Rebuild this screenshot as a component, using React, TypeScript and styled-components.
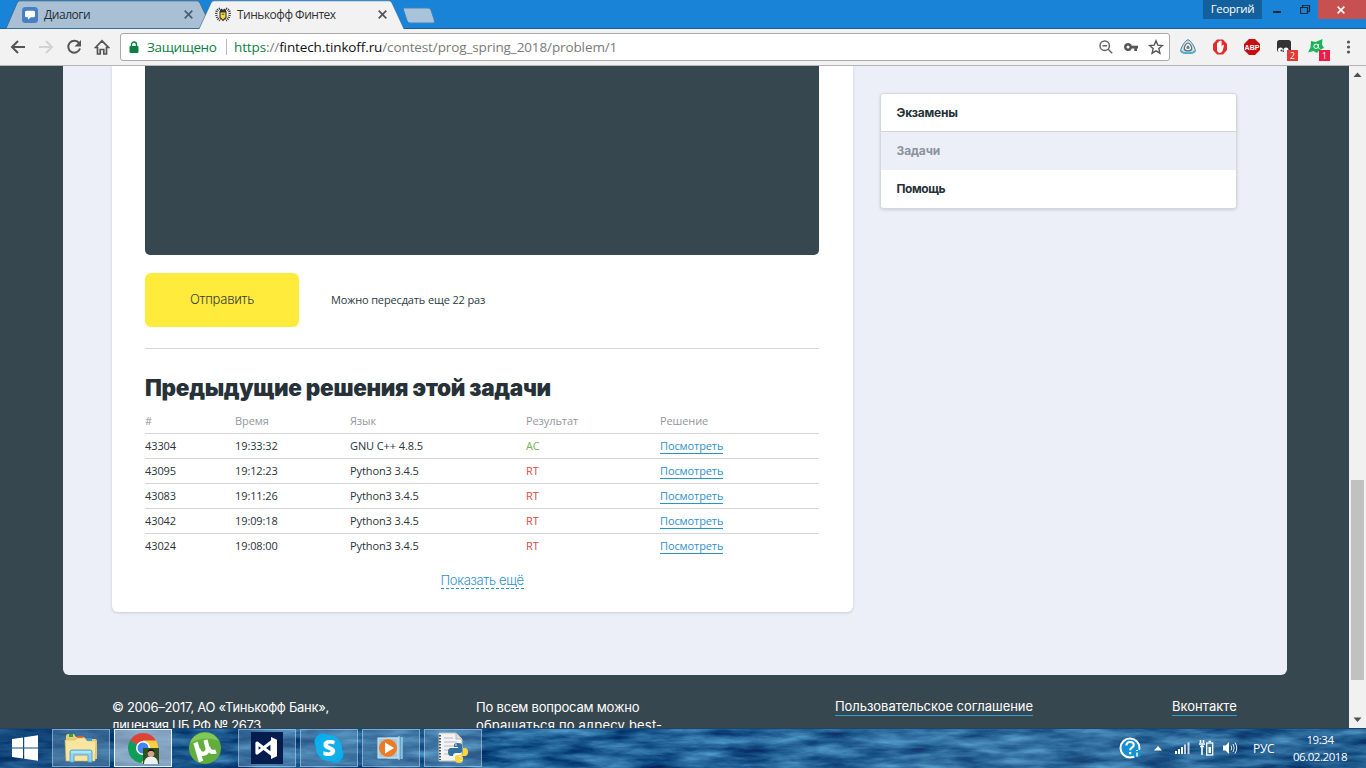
import React from "react";
import styled, { createGlobalStyle, css } from "styled-components";

const Global = createGlobalStyle`
  * { box-sizing: border-box; }
  body { margin: 0; overflow: hidden; background: #37474f; }
  svg { display: block; flex: none; }
`;

const ui = `"Open Sans", "Noto Sans", sans-serif`;
const brand = `Inter, "Open Sans", sans-serif`;

const Desktop = styled.div`
  width: 1366px;
  height: 768px;
  display: flex;
  flex-direction: column;
  overflow: hidden;
  font-family: ${ui};
`;

/* ---------- browser chrome ---------- */

const TabStrip = styled.header`
  height: 29px;
  flex: none;
  display: flex;
  align-items: flex-start;
  background: #1883d7;
  border-bottom: 1px solid #1a5c92;
  padding-left: 6px;
`;

const Tab = styled.div<{ $active?: boolean }>`
  position: relative;
  width: 206px;
  height: 29px;
  margin-left: ${(p) => (p.$active ? -13 : 0)}px;
  z-index: ${(p) => (p.$active ? 2 : 1)};
  display: flex;
  align-items: center;
  padding: 0 ${(p) => (p.$active ? 18 : 19)}px 0 16px;
  font-size: 12px;
  color: ${(p) => (p.$active ? "#333" : "#1f2d3a")};
`;

const TabShape = styled.svg`
  position: absolute;
  inset: 0;
  z-index: -1;
`;

const TabTitle = styled.span<{ $spacing: number }>`
  flex: 1;
  margin-left: 6px;
  letter-spacing: ${(p) => p.$spacing}px;
  white-space: nowrap;
`;

const NewTab = styled.svg`
  margin: 7px 0 0 -3px;
`;

const WindowControls = styled.div`
  margin-left: auto;
  display: flex;
  height: 19px;
`;

const UserName = styled.div`
  width: 59px;
  background: #14609c;
  color: #fff;
  font-size: 11.5px;
  line-height: 18px;
  text-align: center;
  letter-spacing: -0.35px;
`;

const ControlButton = styled.div<{ $w: number; $close?: boolean }>`
  width: ${(p) => p.$w}px;
  display: flex;
  align-items: center;
  justify-content: center;
  padding-right: 3px;
  background: ${(p) => (p.$close ? "#c75050" : "transparent")};
`;

const Toolbar = styled.div`
  height: 37px;
  flex: none;
  display: flex;
  align-items: center;
  background: #f2f2f2;
  border-bottom: 1px solid #b4b4b4;
  padding-left: 10px;
`;

const NavButtons = styled.nav`
  display: flex;
  gap: 12px;
  width: 110px;
`;

const Omnibox = styled.div`
  width: 1050px;
  height: 28px;
  display: flex;
  align-items: center;
  background: #fff;
  border: 1px solid #aaa;
  border-radius: 3px;
  padding: 0 5px 0 8px;
  font-size: 13.5px;
`;

const Secure = styled.span`
  color: #0b8043;
  margin-left: 8px;
  width: 79px;
  letter-spacing: -0.36px;
`;

const Url = styled.span`
  border-left: 1px solid #bbb;
  padding-left: 7px;
  line-height: 16px;
  color: #7a7a7a;
  flex: 1;
  letter-spacing: -0.11px;
  b { font-weight: 400; color: #0b8043; }
  i { font-style: normal; color: #111; }
`;

const OmniIcons = styled.div`
  display: flex;
  align-items: center;
  gap: 9px;
`;

const Extensions = styled.div`
  flex: 1;
  display: flex;
  align-items: center;
  padding-left: 10px;
  gap: 16px;
`;

const Extension = styled.div`
  position: relative;
  width: 16px;
  height: 16px;
`;

const Badge = styled.span<{ $bg: string }>`
  position: absolute;
  left: 11px;
  top: 11px;
  width: 11px;
  height: 11px;
  background: ${(p) => p.$bg};
  color: #fff;
  font-size: 8.5px;
  line-height: 11px;
  text-align: center;
`;

/* ---------- page ---------- */

const Viewport = styled.div`
  height: 662px;
  flex: none;
  display: flex;
  overflow: hidden;
`;

const Page = styled.div`
  flex: 1;
  background: #37474f;
  overflow: hidden;
`;

const Panel = styled.main`
  margin: 0 62px 0 63px;
  height: 609px;
  padding: 0 50px 0 49px;
  background: #eceff7;
  border-radius: 0 0 6px 6px;
  display: flex;
  justify-content: space-between;
  align-items: flex-start;
`;

const Card = styled.section`
  width: 741px;
  height: 546px;
  padding: 0 34px 0 33px;
  background: #fff;
  border-radius: 0 0 6px 6px;
  box-shadow: 0 1px 3px rgba(55, 71, 79, 0.22);
`;

const Editor = styled.div`
  height: 189px;
  background: #37474f;
  border-radius: 0 0 5px 5px;
`;

const SubmitRow = styled.div`
  height: 94px;
  padding-top: 18px;
  display: flex;
  border-bottom: 1px solid #d5d8da;
`;

const SubmitButton = styled.button`
  width: 154px;
  height: 54px;
  padding: 0 0 2px;
  border: 0;
  border-radius: 6px;
  background: #ffeb3b;
  color: #37403f;
  font: 300 13px ${brand};
  letter-spacing: -0.25px;
`;

const Attempts = styled.span`
  margin-left: 32px;
  line-height: 54px;
  font-size: 11px;
  color: #2c3a41;
  letter-spacing: -0.14px;
`;

const Heading = styled.h2`
  margin: 21px 0 0;
  height: 35px;
  font: 900 22.5px/35px ${brand};
  color: #263238;
  letter-spacing: -0.3px;
  white-space: nowrap;
`;

const Row = styled.div<{ $head?: boolean; $last?: boolean }>`
  display: grid;
  grid-template-columns: 90px 115px 176px 134px 1fr;
  height: ${(p) => (p.$head ? 29 : 25)}px;
  padding: ${(p) => (p.$head ? "3px 0 1px" : "0 0 1px")};
  align-items: center;
  font-size: 11px;
  line-height: 15px;
  letter-spacing: -0.1px;
  color: ${(p) => (p.$head ? "#9398a0" : "#29343b")};
  border-bottom: 1px solid ${(p) => (p.$last ? "transparent" : "#d3d6d9")};
`;

const Verdict = styled.span<{ $ok: boolean }>`
  color: ${(p) => (p.$ok ? "#74b356" : "#d84c3f")};
`;

const link = css`
  color: #2f90c8;
  text-decoration: none;
`;

const ViewLink = styled.a`
  ${link}
  justify-self: start;
  line-height: 14px;
  margin-top: 1px;
  border-bottom: 1px solid #2b93c6;
`;

const MoreLink = styled.a`
  ${link}
  display: block;
  width: 83px;
  margin: 13px auto 0;
  font: 300 13px/16px ${brand};
  letter-spacing: -0.3px;
  white-space: nowrap;
  border-bottom: 1px dashed #2b93c6;
`;

const SideMenu = styled.aside`
  width: 357px;
  margin-top: 27px;
  background: #fff;
  border: 1px solid #d3d8dd;
  border-radius: 4px;
  box-shadow: 0 1px 3px rgba(55, 71, 79, 0.2);
  overflow: hidden;
`;

const SideItem = styled.div<{ $current?: boolean; $h: number; $spacing: number }>`
  height: ${(p) => p.$h}px;
  padding: 0 16px;
  font: 700 12px/${(p) => p.$h}px ${brand};
  letter-spacing: ${(p) => p.$spacing}px;
  text-indent: -0.5px;
  color: ${(p) => (p.$current ? "#8a939b" : "#263238")};
  background: ${(p) => (p.$current ? "#eceff7" : "#fff")};
  ${(p) => p.$current && "border-top: 1px solid #d0d4d8; line-height: 37px;"}
`;

const Footer = styled.footer`
  display: flex;
  padding: 23px 112px 0;
  font: 400 13px/18px ${brand};
  color: #fff;
  white-space: nowrap;
`;

const FooterCell = styled.div<{ $w: number }>`
  width: ${(p) => p.$w}px;
`;

const FooterLine = styled.div<{ $spacing: number }>`
  letter-spacing: ${(p) => p.$spacing}px;
`;

const FooterLink = styled.a<{ $spacing: number }>`
  display: block;
  width: fit-content;
  line-height: 17px;
  letter-spacing: ${(p) => p.$spacing}px;
  border-bottom: 1px solid #2b9fd9;
`;

const Scrollbar = styled.div`
  width: 17px;
  background: #f1f1f1;
  display: flex;
  flex-direction: column;
  align-items: center;
`;

const Thumb = styled.div`
  width: 13px;
  height: 200px;
  margin-top: 397px;
  margin-bottom: 31px;
  background: #c1c1c1;
`;

/* ---------- taskbar ---------- */

const Taskbar = styled.div`
  position: relative;
  height: 40px;
  flex: none;
  display: flex;
  align-items: center;
  overflow: hidden;
  isolation: isolate;
  background: #1c4f80;
`;

const Water = styled.svg`
  position: absolute;
  inset: 0;
  z-index: -1;
`;

const Start = styled.div`
  width: 52px;
  padding-left: 12px;
`;

const TaskButton = styled.div<{ $state?: "open" | "active" }>`
  width: 58px;
  height: 38px;
  margin-right: 4px;
  display: flex;
  align-items: center;
  justify-content: center;
  ${(p) =>
    p.$state === "open" &&
    "background: rgba(150, 185, 215, 0.3); border: 1px solid rgba(190, 212, 232, 0.55);"}
  ${(p) =>
    p.$state === "active" &&
    "background: rgba(200, 215, 230, 0.6); border: 1px solid rgba(240, 246, 252, 0.95);"}
`;

const Tray = styled.div`
  margin-left: auto;
  display: flex;
  align-items: center;
  color: #fff;
  font-size: 12px;
`;

const TrayIcon = styled.div<{ $w: number }>`
  width: ${(p) => p.$w}px;
`;

const Lang = styled.span`
  width: 31px;
  letter-spacing: -0.3px;
`;

const Clock = styled.div`
  width: 72px;
  margin-right: 10px;
  text-align: center;
  font-size: 11.5px;
  line-height: 17px;
  letter-spacing: -0.45px;
`;

const rows: [string, string, string, string][] = [
  ["43304", "19:33:32", "GNU C++ 4.8.5", "AC"],
  ["43095", "19:12:23", "Python3 3.4.5", "RT"],
  ["43083", "19:11:26", "Python3 3.4.5", "RT"],
  ["43042", "19:09:18", "Python3 3.4.5", "RT"],
  ["43024", "19:08:00", "Python3 3.4.5", "RT"],
];

const Close = ({ color = "#555", size = 9 }: { color?: string; size?: number }) => (
  <svg width={size} height={size} viewBox="0 0 9 9" stroke={color} strokeWidth="1.7">
    <path d="M.7.7l7.6 7.6M8.3.7L.7 8.3" />
  </svg>
);

const Browser = () => (
  <>
    <TabStrip>
      <Tab>
        <TabShape width="206" height="29">
          <path d="M0 28.5L11 3Q12 .8 14 .8H191Q193 .8 194 3L206 28.5Z" fill="#a9bfd3" stroke="#3b6d99" />
        </TabShape>
        <svg width="16" height="16" viewBox="0 0 16 16">
          <rect width="16" height="16" rx="3.5" fill="#4680c2" />
          <path d="M4.500 3.800h7q1.500 0 1.500 1.500v3.500q0 1.500-1.500 1.500H8.800L6 12.800v-2.500H4.500Q3 10.300 3 8.800V5.300Q3 3.800 4.500 3.800z" fill="#fff" />
        </svg>
        <TabTitle $spacing={-0.45}>Диалоги</TabTitle>
        <Close color="#4b5f72" />
      </Tab>
      <Tab $active>
        <TabShape width="206" height="29">
          <path d="M0 29L12 3Q13 .8 15 .8H190Q192 .8 193 3L205 29Z" fill="#f2f2f2" />
          <path d="M0 29L12 3Q13 .8 15 .8H190Q192 .8 193 3L205 29" fill="none" stroke="#2f71a8" strokeWidth=".7" />
        </TabShape>
        <svg width="16" height="16" viewBox="0 0 16 16" fill="none" stroke="#333">
          <path d="M5 1.500Q1 3 1.300 7q.2 4 3.700 6.500M11 1.500q4 1.500 3.700 5.500-.2 4-3.700 6.500" strokeWidth="2.400" strokeDasharray="1 1" />
          <path d="M5 4.500l1.200-2.500L8 3.300 9.800 2 11 4.500z" fill="#333" />
          <path d="M5 5h6v5.500L8 13.500l-3-3z" fill="#f7d934" strokeWidth="1.100" />
          <path d="M6.800 7.300h2.400" strokeWidth=".8" />
        </svg>
        <TabTitle $spacing={-0.5}>Тинькофф Финтех</TabTitle>
        <Close />
      </Tab>
      <NewTab width="34" height="17">
        <path d="M2.500 1H26q2 0 3 2l3.500 11q.5 2-1.500 2H8q-2 0-2.800-2L1.500 3Q1 1 2.500 1z" fill="#a9c3db" stroke="#3f83bb" />
      </NewTab>
      <WindowControls>
        <UserName>Георгий</UserName>
        <ControlButton $w={33}>
          <svg width="8" height="9"><rect width="8" height="2" y="6" fill="#1b2a38" /></svg>
        </ControlButton>
        <ControlButton $w={23}>
          <svg width="11" height="10" fill="none" stroke="#1b2a38"><path d="M.5 2.500h7v6h-7zM2.500 2.500v-2h7v6h-2" strokeWidth="1.200" /></svg>
        </ControlButton>
        <ControlButton $w={48} $close><Close color="#fff" size={8} /></ControlButton>
      </WindowControls>
    </TabStrip>
    <Toolbar>
      <NavButtons>
        <svg width="16" height="16" viewBox="0 0 16 16" fill="none" stroke="#555" strokeWidth="2"><path d="M15 8H2.500M8 2L2 8l6 6" /></svg>
        <svg width="16" height="16" viewBox="0 0 16 16" fill="none" stroke="#d2d2d2" strokeWidth="2"><path d="M1 8h12.500M8 2l6 6-6 6" /></svg>
        <svg width="16" height="16" viewBox="0 0 16 16" fill="none" stroke="#555" strokeWidth="2">
          <path d="M13.200 4.200A6 6 0 1 0 14 9.500" /><path d="M15 1v6.500H8.500z" fill="#555" stroke="none" />
        </svg>
        <svg width="16" height="16" viewBox="0 0 16 16" fill="none" stroke="#555" strokeWidth="1.700"><path d="M1.500 8.500L8 1.800l6.500 6.700H12.500V15H9.800v-4.500H6.200V15H3.500V8.500z" /></svg>
      </NavButtons>
      <Omnibox>
        <svg width="10" height="13" viewBox="0 0 10 13"><path d="M2.500 6V3.500a2.500 2.500 0 0 1 5 0V6" fill="none" stroke="#0b8043" strokeWidth="1.400" /><rect x=".5" y="5" width="9" height="7" rx="1" fill="#0b8043" /></svg>
        <Secure>Защищено</Secure>
        <Url><b>https</b>://<i>fintech.tinkoff.ru</i>/contest/prog_spring_2018/problem/1</Url>
        <OmniIcons>
          <svg width="16" height="16" viewBox="0 0 16 16" fill="none" stroke="#666" strokeWidth="1.500"><circle cx="6.700" cy="6.700" r="4.700" /><path d="M10.200 10.200l4 4M4.500 6.700h4.500" /></svg>
          <svg width="16" height="10" viewBox="0 0 16 10"><path fillRule="evenodd" d="M5 1a4 4 0 0 1 3.800 2.800H15v2.600h-1V9h-2.700V6.400H8.800A4 4 0 1 1 5 1zm0 2.500a1.500 1.500 0 1 0 0 3 1.500 1.500 0 0 0 0-3z" fill="#555" /></svg>
          <svg width="16" height="16" viewBox="0 0 16 16" fill="none" stroke="#555" strokeWidth="1.400"><path d="M8 1.800l1.800 4.300 4.600.4-3.500 3.100 1 4.600L8 11.800l-3.900 2.400 1-4.600L1.600 6.500l4.600-.4z" /></svg>
        </OmniIcons>
      </Omnibox>
      <Extensions>
        <Extension>
          <svg width="16" height="16" viewBox="0 0 16 16"><path d="M8 .8C10.500.8 15.500 9 15.300 12 15 15 1 15 .7 12 .5 9 5.500.8 8 .8z" fill="#cfdde5" stroke="#557f97" /><path d="M8 4c2 0 4 4 3.700 6-.6 2.600-6.800 2.600-7.400 0C4 8 6 4 8 4z" fill="#f8f8f8" stroke="#4d7084" strokeWidth="1.200" /><path d="M1 12c2 3 12 3 14 0" fill="none" stroke="#43abc9" strokeWidth="1.500" /><path d="M8 6.500c1 0 1.800 1.500 1.600 2.500-.3 1.300-2.900 1.300-3.200 0C6.200 8 7 6.500 8 6.500z" fill="#777" /></svg>
        </Extension>
        <Extension>
          <svg width="16" height="16" viewBox="0 0 16 16"><path d="M5 .5h6L15 5v6l-4 4.500H5L1 11V5z" fill="#e32b2b" /><path d="M5 8V4q1-1 1.500 0V2.500q1-1 1.500 0V2q1-1 1.600 0v5.500l1-1.500q1.500-.5 1.400.5L10.500 12q-1 2-3 2Q5 13.500 5 11z" fill="#fff" /></svg>
        </Extension>
        <Extension>
          <svg width="16" height="16" viewBox="0 0 16 16"><path d="M5 0h6l5 5v6l-5 5H5l-5-5V5z" fill="#c70d12" /><text x="8" y="10.700" fontFamily="Liberation Sans" fontWeight="700" fontSize="7" textAnchor="middle" fill="#fff">ABP</text></svg>
        </Extension>
        <Extension>
          <svg width="16" height="16" viewBox="0 0 16 16"><path d="M3.500 1h9q2.500 0 2.500 2.500V13H3.500Q1 13 1 10.500v-7Q1 1 3.500 1z" fill="#333" /><circle cx="4.500" cy="11" r="2.500" fill="#fff" /><circle cx="10" cy="11" r="2.500" fill="#fff" /><circle cx="5.500" cy="11.500" r="1" fill="#333" /></svg>
          <Badge $bg="#e53935">2</Badge>
        </Extension>
        <Extension>
          <svg width="16" height="16" viewBox="0 0 16 16"><path d="M3 2l4.500 1L14.500 0 14 5.500 16 9l-4.500 2L9 14l-3.500-2L0 13.500 2.500 8.500z" fill="#1bb35b" /><circle cx="8" cy="7.300" r="2.200" fill="none" stroke="#fff" /><path d="M10.400 5v4l1.200.5" fill="none" stroke="#fff" strokeWidth=".9" /></svg>
          <Badge $bg="#ed1c46">1</Badge>
        </Extension>
        <svg width="16" height="16" fill="#555"><circle cx="8.500" cy="3" r="1.600" /><circle cx="8.500" cy="8" r="1.600" /><circle cx="8.500" cy="13" r="1.600" /></svg>
      </Extensions>
    </Toolbar>
  </>
);

const WaterSurface = () => (
  <Water width="1366" height="40">
    <defs>
      <filter id="waves" x="0" y="0" width="100%" height="100%" colorInterpolationFilters="sRGB">
        <feTurbulence type="fractalNoise" baseFrequency="0.022 0.11" numOctaves="5" seed="21" />
        <feColorMatrix values="0.6 0 0 0 -0.18  0.75 0 0 0 -0.01  0.7 0 0 0 0.22  0 0 0 0 1" />
      </filter>
      <linearGradient id="light">
        <stop offset="0" stopColor="#03285a" stopOpacity=".45" />
        <stop offset=".35" stopColor="#1c5f9c" stopOpacity=".1" />
        <stop offset=".75" stopColor="#6ba3cc" stopOpacity=".28" />
        <stop offset="1" stopColor="#33648f" stopOpacity=".2" />
      </linearGradient>
    </defs>
    <rect width="1366" height="40" filter="url(#waves)" />
    <rect width="1366" height="40" fill="url(#light)" />
    <rect width="1366" height="1" fill="#1c4569" />
  </Water>
);

const TaskbarView = () => (
  <Taskbar>
    <WaterSurface />
    <Start>
      <svg width="26" height="26" viewBox="0 0 26 26" fill="#fff"><path d="M0 4l11-1.600v10H0zM12.200 2.200L26 .2v12.200H12.200zM0 13.600h11v10L0 22zM12.200 13.600H26v12.200l-13.800-2z" /></svg>
    </Start>
    <TaskButton $state="open">
      <svg width="34" height="32" viewBox="0 0 34 32">
        <path d="M2 4q0-2 2-2h6l2 3h8l1 2h10q2 0 2 2v18H2z" fill="#e9cc73" />
        <path d="M5 2h4v3H5z" fill="#28a745" /><path d="M13 4h6v3h-6z" fill="#d45b34" /><path d="M21 6h7v3h-7z" fill="#3b91d1" />
        <path d="M1 8h10l2-2h8l2 3h9l-1 20H2z" fill="#f8e6a0" stroke="#d3b65f" strokeWidth=".6" />
        <path d="M6 30V20q0-2 2-2h18q2 0 2 2v10h-4v-7H10v7z" fill="#8fd3ee" stroke="#5ca8cf" />
        <path d="M7 20h20" stroke="#d9f4fd" />
      </svg>
    </TaskButton>
    <TaskButton $state="active">
      <svg width="32" height="32" viewBox="0 0 32 32">
        <path d="M16 16L3 8.500A15 15 0 0 1 29 8.500z" fill="#db4437" /><path d="M16 16L3 8.500A15 15 0 0 0 14.500 31L21 20z" fill="#0f9d58" />
        <path d="M16 16l5 4-6.500 11A15 15 0 0 0 29 8.500H16z" fill="#ffcd40" /><circle cx="16" cy="16" r="7" fill="#fff" /><circle cx="16" cy="16" r="5.500" fill="#4285f4" />
        <path d="M16 16h16v16H16z" fill="#31501f" /><path d="M17 32q0-7 7-8 7 1 7 8z" fill="#eef1f3" /><circle cx="24" cy="21.500" r="3.300" fill="#d2a386" /><path d="M20.500 21q0-4 3.500-4t3.500 4l-2-2h-3z" fill="#1c1a18" />
      </svg>
    </TaskButton>
    <TaskButton>
      <svg width="34" height="34" viewBox="0 0 34 34">
        <circle cx="17" cy="17" r="16" fill="#62ae3c" /><path d="M2 12A16 16 0 0 1 31 10Q18 4 2 12z" fill="#83c65a" />
        <path d="M7.500 11.500l5.500 19" fill="none" stroke="#fff" strokeWidth="4.500" />
        <path d="M10 18q2 6 6.500 4.500 4-1.500 3-5.500L17.500 9M20 16q2 6.500 8 4.500" fill="none" stroke="#fff" strokeWidth="4.200" />
      </svg>
    </TaskButton>
    <TaskButton $state="open">
      <svg width="32" height="32" viewBox="0 0 32 32"><rect width="32" height="32" fill="#051d4d" /><path d="M6 11L21 22.500V9.500L6 21z" fill="none" stroke="#fff" strokeWidth="3.200" strokeLinejoin="round" /><path d="M20 5l6 2.800v16.400L20 27z" fill="#fff" /></svg>
    </TaskButton>
    <TaskButton $state="open">
      <svg width="30" height="30" viewBox="0 0 30 30">
        <circle cx="9" cy="9" r="8.500" fill="#00aff0" /><circle cx="21" cy="21" r="8.500" fill="#00aff0" /><circle cx="15" cy="15" r="13" fill="#12aeea" />
        <text x="15" y="23" textAnchor="middle" fontFamily="Open Sans" fontWeight="800" fontSize="23" fill="#fff">S</text>
      </svg>
    </TaskButton>
    <TaskButton $state="open">
      <svg width="28" height="26" viewBox="0 0 28 26"><path d="M10 2h15v22H10z" fill="#5ba6cf" /><path d="M22 1v24M25 2v22" stroke="#c7e5f2" /><rect x="1" y="3" width="20" height="20" fill="#a7cbdc" stroke="#d7e9f2" /><circle cx="11" cy="13" r="9" fill="#ed7b26" /><path d="M8 7.500L17 13l-9 5.500z" fill="#fff" /></svg>
    </TaskButton>
    <TaskButton $state="open">
      <svg width="32" height="34" viewBox="0 0 32 34">
        <path d="M2 2h17l6 6v22H2z" fill="#f3f3f3" stroke="#bbb" /><path d="M19 2v6h6" fill="#ddd" stroke="#bbb" />
        <path d="M3 4v25" stroke="#555" strokeWidth="2" strokeDasharray="1.500 1.500" /><path d="M7 7h9M7 11h13M7 15h14M7 19h7M7 23h5" stroke="#b7bcc2" />
        <path d="M17 14q0-2 4-2t4 2v6q0 2-3 2h-3q-3 0-3 3h-2q-3 0-3-4t3-4h7v-1h-4z" fill="#356f9f" />
        <path d="M26 17h2q3 0 3 4t-3 4h-6v1h4v3q0 3-4 3t-4-3v-3q0-2 3-2h2q3 0 3-3z" fill="#ffd43b" />
        <circle cx="19" cy="14" r=".8" fill="#fff" /><circle cx="24" cy="29.500" r=".8" fill="#fff" />
      </svg>
    </TaskButton>
    <Tray>
      <TrayIcon $w={35}>
        <svg width="22" height="22" viewBox="0 0 22 22"><circle cx="11" cy="11" r="9.500" fill="#1592cf" stroke="#fff" strokeWidth="2" /><path d="M7.500 8.500q0-3.500 3.700-3.500t3.500 3q0 1.800-2 2.800-1.500.8-1.500 2.400M11.200 15v2.200" fill="none" stroke="#fff" strokeWidth="2.200" /><circle cx="18" cy="16.500" r="4" fill="#1592cf" /><path d="M18 13v1M18 15.500v4" stroke="#fff" strokeWidth="1.500" /></svg>
      </TrayIcon>
      <TrayIcon $w={21}><svg width="8" height="5" fill="#fff"><path d="M4 0l4 4.500H0z" /></svg></TrayIcon>
      <TrayIcon $w={24}>
        <svg width="15" height="12" fill="#fff"><path d="M0 9h2v3H0zM3 7h2v5H3zM6 5h2v7H6z" /><path d="M9 2.500h2V12H9zM12.500 .500h2V12h-2z" opacity=".75" /></svg>
      </TrayIcon>
      <TrayIcon $w={24}>
        <svg width="15" height="16" viewBox="0 0 15 16" fill="none" stroke="#fff"><path d="M1.500 0v3M4.500 0v3M0 4h6M1 6.500h4M3 5v10" strokeWidth="1.600" /><rect x="7.700" y="3" width="6" height="12" strokeWidth="1.300" /><path d="M9.500 1.500h2.500" strokeWidth="1.500" /><path d="M9.500 7h2.500v6H9.500z" fill="#fff" stroke="none" /></svg>
      </TrayIcon>
      <TrayIcon $w={30}>
        <svg width="15" height="14" viewBox="0 0 15 14"><path d="M0 4.500h2.500L6 1v12L2.500 9.500H0z" fill="#fff" /><path d="M8 4.500q1.500 2.500 0 5M10 3q2.500 4 0 8M12 1.500q3.500 5.500 0 11" fill="none" stroke="#e6eef5" /></svg>
      </TrayIcon>
      <Lang>РУС</Lang>
      <Clock>19:34<br />06.02.2018</Clock>
    </Tray>
  </Taskbar>
);

export default function App() {
  return (
    <Desktop>
      <Global />
      <Browser />
      <Viewport>
        <Page>
          <Panel>
            <Card>
              <Editor />
              <SubmitRow>
                <SubmitButton>Отправить</SubmitButton>
                <Attempts>Можно пересдать еще 22 раз</Attempts>
              </SubmitRow>
              <Heading>Предыдущие решения этой задачи</Heading>
              <Row $head>
                <span>#</span><span>Время</span><span>Язык</span><span>Результат</span><span>Решение</span>
              </Row>
              {rows.map(([id, time, lang, verdict], i) => (
                <Row key={id} $last={i === rows.length - 1}>
                  <span>{id}</span>
                  <span>{time}</span>
                  <span>{lang}</span>
                  <Verdict $ok={verdict === "AC"}>{verdict}</Verdict>
                  <ViewLink>Посмотреть</ViewLink>
                </Row>
              ))}
              <MoreLink>Показать ещё</MoreLink>
            </Card>
            <SideMenu>
              <SideItem $h={37} $spacing={-0.2}>Экзамены</SideItem>
              <SideItem $current $h={39} $spacing={-0.12}>Задачи</SideItem>
              <SideItem $h={38} $spacing={-0.42}>Помощь</SideItem>
            </SideMenu>
          </Panel>
          <Footer>
            <FooterCell $w={364}>
              <FooterLine $spacing={-0.29}>© 2006–2017, АО «Тинькофф Банк»,</FooterLine>
              <FooterLine $spacing={-0.35}>лицензия ЦБ РФ № 2673</FooterLine>
            </FooterCell>
            <FooterCell $w={359}>
              <FooterLine $spacing={-0.2}>По всем вопросам можно</FooterLine>
              <FooterLine $spacing={0.18}>обращаться по адресу best-</FooterLine>
            </FooterCell>
            <FooterCell $w={337}><FooterLink $spacing={-0.05}>Пользовательское соглашение</FooterLink></FooterCell>
            <FooterCell $w={64}><FooterLink $spacing={0.02}>Вконтакте</FooterLink></FooterCell>
          </Footer>
        </Page>
        <Scrollbar>
          <svg width="17" height="17" fill="#505050"><path d="M8.500 6.500l4 4.500h-8z" /></svg>
          <Thumb />
          <svg width="17" height="17" fill="#505050"><path d="M8.500 11l4-4.500h-8z" /></svg>
        </Scrollbar>
      </Viewport>
      <TaskbarView />
    </Desktop>
  );
}
